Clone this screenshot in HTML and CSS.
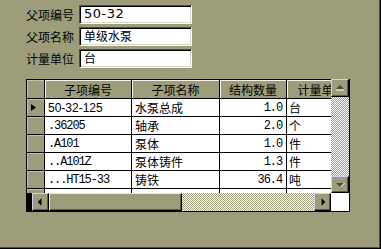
FILE: index.html
```html
<!DOCTYPE html>
<html lang="zh-CN">
<head>
    <meta charset="UTF-8">
    <title>产品结构</title>
    <link rel="stylesheet" href="styles.css">
</head>
<body>
    <div class="window">
        <div class="form">
            <div class="form-row">
                <span class="label">父项编号</span>
                <div class="field latin">50-32</div>
            </div>
            <div class="form-row">
                <span class="label">父项名称</span>
                <div class="field">单级水泵</div>
            </div>
            <div class="form-row">
                <span class="label">计量单位</span>
                <div class="field">台</div>
            </div>
        </div>

        <div class="grid">
            <div class="viewport">
                <div class="sheet">
                    <div class="cell ind head"></div>
                    <div class="cell head">子项编号</div>
                    <div class="cell head">子项名称</div>
                    <div class="cell head">结构数量</div>
                    <div class="cell head">计量单位</div>

                    <div class="cell ind">
                        <svg width="7" height="9" viewBox="0 0 7 9"><path d="M1 1 L6 4.5 L1 8 Z" fill="#000"/></svg>
                    </div>
                    <div class="cell code sans">50-32-125</div>
                    <div class="cell">水泵总成</div>
                    <div class="cell num mono">1.0</div>
                    <div class="cell unit">台</div>

                    <div class="cell ind"></div>
                    <div class="cell code mono">.36205</div>
                    <div class="cell">轴承</div>
                    <div class="cell num mono">2.0</div>
                    <div class="cell unit">个</div>

                    <div class="cell ind"></div>
                    <div class="cell code mono">.A101</div>
                    <div class="cell">泵体</div>
                    <div class="cell num mono">1.0</div>
                    <div class="cell unit">件</div>

                    <div class="cell ind"></div>
                    <div class="cell code mono">..A101Z</div>
                    <div class="cell">泵体铸件</div>
                    <div class="cell num mono">1.3</div>
                    <div class="cell unit">件</div>

                    <div class="cell ind"></div>
                    <div class="cell code mono">...HT15-33</div>
                    <div class="cell">铸铁</div>
                    <div class="cell num mono">36.4</div>
                    <div class="cell unit">吨</div>

                    <div class="cell ind"></div>
                    <div class="cell"></div>
                    <div class="cell"></div>
                    <div class="cell"></div>
                    <div class="cell"></div>
                </div>
            </div>

            <div class="vscroll">
                <div class="btn btn-up">
                    <svg width="16" height="16" viewBox="0 0 16 16">
                        <path d="M4 9 L8 5 L12 9 Z" fill="#4a4a36"/>
                        <path d="M4 10 H12" stroke="#fff" stroke-width="1"/>
                    </svg>
                </div>
                <div class="track"></div>
                <div class="btn btn-down">
                    <svg width="16" height="16" viewBox="0 0 16 16">
                        <path d="M4 6 L12 6 L8 10 Z" fill="#4a4a36"/>
                        <path d="M8.5 10 L12.5 6" stroke="#fff" stroke-width="1"/>
                    </svg>
                </div>
            </div>

            <div class="hscroll">
                <div class="stub"></div>
                <div class="btn btn-left">
                    <svg width="16" height="16" viewBox="0 0 16 16"><path d="M9 4 L5 8 L9 12 Z" fill="#000"/></svg>
                </div>
                <div class="thumb"></div>
                <div class="track"></div>
                <div class="btn btn-right">
                    <svg width="16" height="16" viewBox="0 0 16 16"><path d="M7 4 L11 8 L7 12 Z" fill="#000"/></svg>
                </div>
            </div>

            <div class="corner"></div>
        </div>
    </div>
</body>
</html>
```

FILE: styles.css
```css
* {
    margin: 0;
    padding: 0;
    box-sizing: border-box;
}

body {
    background-color: #9d9d7b;
    font-family: "Noto Sans CJK SC", sans-serif;
    font-size: 12px;
    color: #000;
}

.window {
    width: 381px;
    height: 249px;
    border-right: 1px solid #000;
    border-bottom: 1px solid #000;
    box-shadow: inset -1px -1px #4e4e3a;
    padding: 5px 0 0 26px;
}

.form {
    display: flex;
    flex-direction: column;
    gap: 3px;
}

.form-row {
    display: flex;
    align-items: center;
    height: 19px;
}

.label {
    width: 53px;
    line-height: 19px;
}

.field {
    width: 113px;
    height: 19px;
    background-color: #fff;
    border: 1px solid;
    border-color: #4e4e3a #fff #fff #4e4e3a;
    box-shadow: inset 1px 1px #000, inset -1px -1px #d6d6c4;
    padding-left: 4px;
    line-height: 16px;
}

.field.latin {
    font-family: "DejaVu Sans", sans-serif;
    font-size: 13px;
    letter-spacing: 0.5px;
}

/* data grid */
.grid {
    display: grid;
    grid-template-columns: 305px 18px;
    grid-template-rows: 114px 18px;
    width: 324px;
    margin-top: 11px;
    border-right: 1px solid #000;
    border-bottom: 1px solid #000;
}

.viewport {
    overflow: hidden;
    background-color: #fff;
}

.sheet {
    display: grid;
    grid-template-columns: 18px 87px 88px 67px 70px;
    grid-template-rows: 19px;
    grid-auto-rows: 18px;
    width: 331px;
    border-left: 1px solid #000;
    border-top: 1px solid #000;
}

.cell {
    display: flex;
    align-items: center;
    border-right: 1px solid #000;
    border-bottom: 1px solid #000;
    white-space: nowrap;
    overflow: hidden;
    padding-left: 3px;
    background-color: #fff;
}

.cell.head {
    justify-content: center;
    padding-left: 0;
    background-color: #9d9d7b;
    box-shadow: inset 1px 1px #f4f4ec;
}

.cell.ind {
    padding-left: 3px;
    background-color: #9d9d7b;
    box-shadow: inset 1px 1px #c4c4ac;
}

.cell.num {
    justify-content: flex-end;
    padding-right: 4px;
}

.cell.unit {
    padding-left: 2px;
}

.sans {
    font-family: "Liberation Sans", sans-serif;
    font-size: 12px;
}

.mono {
    font-family: "Liberation Mono", monospace;
    font-size: 12px;
    letter-spacing: -1.1px;
}

/* scrollbars */
.btn {
    display: flex;
    align-items: center;
    justify-content: center;
    width: 18px;
    height: 18px;
    background-color: #9d9d7b;
    border: 1px solid;
    border-color: #cfcff4 #000 #000 #cfcff4;
    box-shadow: inset -1px -1px #5c5c46;
}

.track {
    background: repeating-conic-gradient(#9d9d7b 0 25%, #fff 0 50%) 0 0 / 2px 2px;
}

.vscroll {
    display: flex;
    flex-direction: column;
}

.vscroll .track {
    flex: 1;
}

.btn-down {
    height: 17px;
}

.hscroll {
    display: flex;
}

.hscroll .btn {
    width: 17px;
}

.stub {
    width: 6px;
    background-color: #000;
}

.thumb {
    width: 133px;
    background-color: #9d9d7b;
    border: 1px solid;
    border-color: #e8e8dc #000 #000 #e8e8dc;
    box-shadow: inset -1px -1px #5c5c46;
}

.hscroll .track {
    flex: 1;
}

.corner {
    background-color: #fff;
}
```
